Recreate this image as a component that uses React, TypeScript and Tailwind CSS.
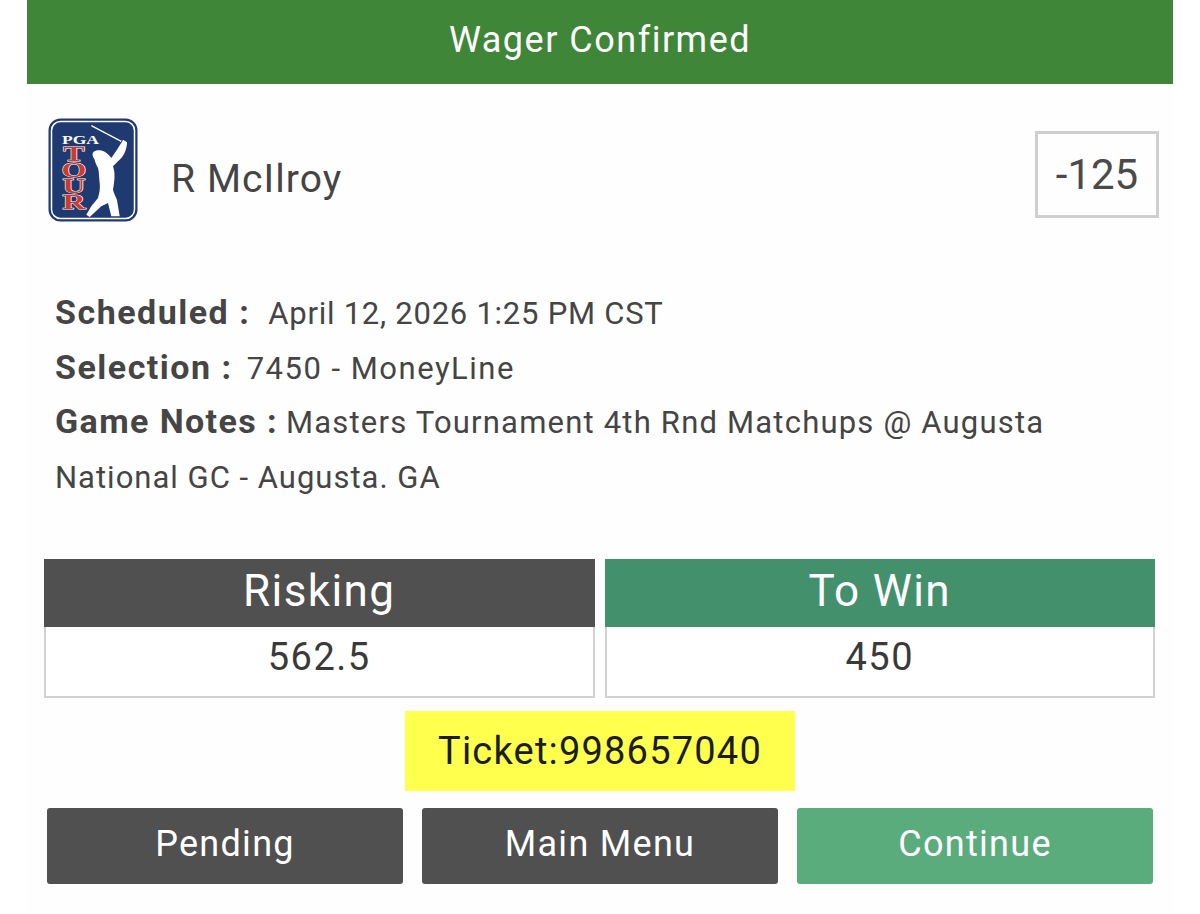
import React from "react";

function TourLogo() {
  const letters = [
    { ch: "T", y: 43 },
    { ch: "O", y: 59 },
    { ch: "U", y: 75 },
    { ch: "R", y: 91 },
  ];
  return (
    <svg width="90" height="104" viewBox="0 0 90 104" className="shrink-0">
      <rect x="0.5" y="0.5" width="89" height="103" rx="12" fill="#1f3a70" />
      <rect x="3.5" y="3.5" width="83" height="97" rx="9" fill="none" stroke="#ffffff" strokeWidth="1.5" />
      <text x="14" y="26" fill="#ffffff" fontSize="13" fontWeight="700" fontFamily="'Liberation Serif', serif" textLength="37" lengthAdjust="spacingAndGlyphs">PGA</text>
      <g fill="#cf3a30" stroke="#ffffff" strokeWidth="0.9" paintOrder="stroke" fontSize="20" fontWeight="700" fontFamily="'Liberation Serif', serif" textAnchor="middle">
        {letters.map((l) => (
          <text key={l.ch} transform={`translate(26 ${l.y}) scale(1.6 1.1)`}>{l.ch}</text>
        ))}
      </g>
      <path d="M43.3 7.7 L73.3 23.3" stroke="#ffffff" strokeWidth="1.3" fill="none" />
      <path
        d="M75 21.7 L79 24.3 C79 31 76 37 73.3 40 L65 48.3 C67 54 67 60 65 71.7 C66 76 68 79 69 82 L71.7 98.3 L63.3 98.3 L60 85 L53.3 88.3 L41.7 99 L38.3 96.7 L43.3 88.3 L50 80 C52 73 52 70 51.7 65 C51 58 51 54 50 50 C48 46 47 44 46.7 41.7 C44 38 44 35 46 33.5 C49 31.5 53 32 55 33 C58 34 60 36 63.3 40 L69 31.7 L74.3 23.3 Z"
        fill="#ffffff"
      />
    </svg>
  );
}

function AmountBox({ title, value, titleBg }: { title: string; value: string; titleBg: string }) {
  return (
    <div className="flex-1">
      <div className={`h-[68px] flex items-center justify-center text-white text-[44px] tracking-[1.4px] pb-1 ${titleBg}`}>{title}</div>
      <div className="h-[71px] flex items-center justify-center border-2 border-t-0 border-[#d2d2d2] bg-white text-[#3a3a3a] text-[38px] tracking-[1.5px] pb-2">
        {value}
      </div>
    </div>
  );
}

function ActionButton({ label, bg }: { label: string; bg: string }) {
  return (
    <button className={`flex-1 h-[76px] pb-1 rounded-[3px] text-white text-[36px] tracking-[1.3px] ${bg}`}>{label}</button>
  );
}

export default function App() {
  return (
    <div className="w-[1200px] h-[914px] overflow-hidden bg-white font-['Roboto',sans-serif]">
      <div className="mx-[27px] h-[914px] bg-[#fffefe]">
        <div className="h-[84px] bg-[#3f8639] flex items-center justify-center text-white text-[36px] tracking-[1.5px] pb-1">
          Wager Confirmed
        </div>

        {/* Player row */}
        <div className="flex items-center pl-[21px] pr-[14px] pt-[34px]">
          <TourLogo />
          <div className="ml-[33px] pt-[18px] text-[39px] tracking-[1.1px] text-[#444444]">R McIlroy</div>
          <div className="ml-auto mt-[8px] w-[124px] h-[87px] border-[3px] border-[#cfcfcf] flex items-center justify-center text-[42px] text-[#4a4a4a]">
            -125
          </div>
        </div>

        {/* Wager details */}
        <div className="mt-[65px] pl-[28px] text-[31px] leading-[54.5px] text-[#454545]">
          <div>
            <span className="text-[34px] leading-none font-bold tracking-[1.5px]">Scheduled :</span>
            <span className="ml-[18px] tracking-[0.75px]">April 12, 2026 1:25 PM CST</span>
          </div>
          <div>
            <span className="text-[34px] leading-none font-bold tracking-[1.5px]">Selection :</span>
            <span className="ml-[14px] tracking-[1.5px]">7450 - MoneyLine</span>
          </div>
          <div className="tracking-[1.2px]">
            <span className="text-[34px] leading-none font-bold tracking-[1.4px]">Game Notes :</span>
            <span className="ml-[8px]">Masters Tournament 4th Rnd Matchups @ Augusta</span>
          </div>
          <div className="tracking-[1px]">National GC - Augusta. GA</div>
        </div>

        {/* Risk / win */}
        <div className="mt-[54px] ml-[17px] mr-[18px] flex gap-[10px]">
          <AmountBox title="Risking" value="562.5" titleBg="bg-[#505050]" />
          <AmountBox title="To Win" value="450" titleBg="bg-[#43916c]" />
        </div>

        <div className="mt-[13px] flex justify-center">
          <div className="w-[390px] h-[80px] bg-[#ffff4d] flex items-center justify-center text-[38px] tracking-[1.2px] text-[#1c1c1c]">
            Ticket:998657040
          </div>
        </div>

        <div className="mt-[17px] mx-[20px] flex gap-[19px]">
          <ActionButton label="Pending" bg="bg-[#505050]" />
          <ActionButton label="Main Menu" bg="bg-[#505050]" />
          <ActionButton label="Continue" bg="bg-[#5bac7d]" />
        </div>
      </div>
    </div>
  );
}
